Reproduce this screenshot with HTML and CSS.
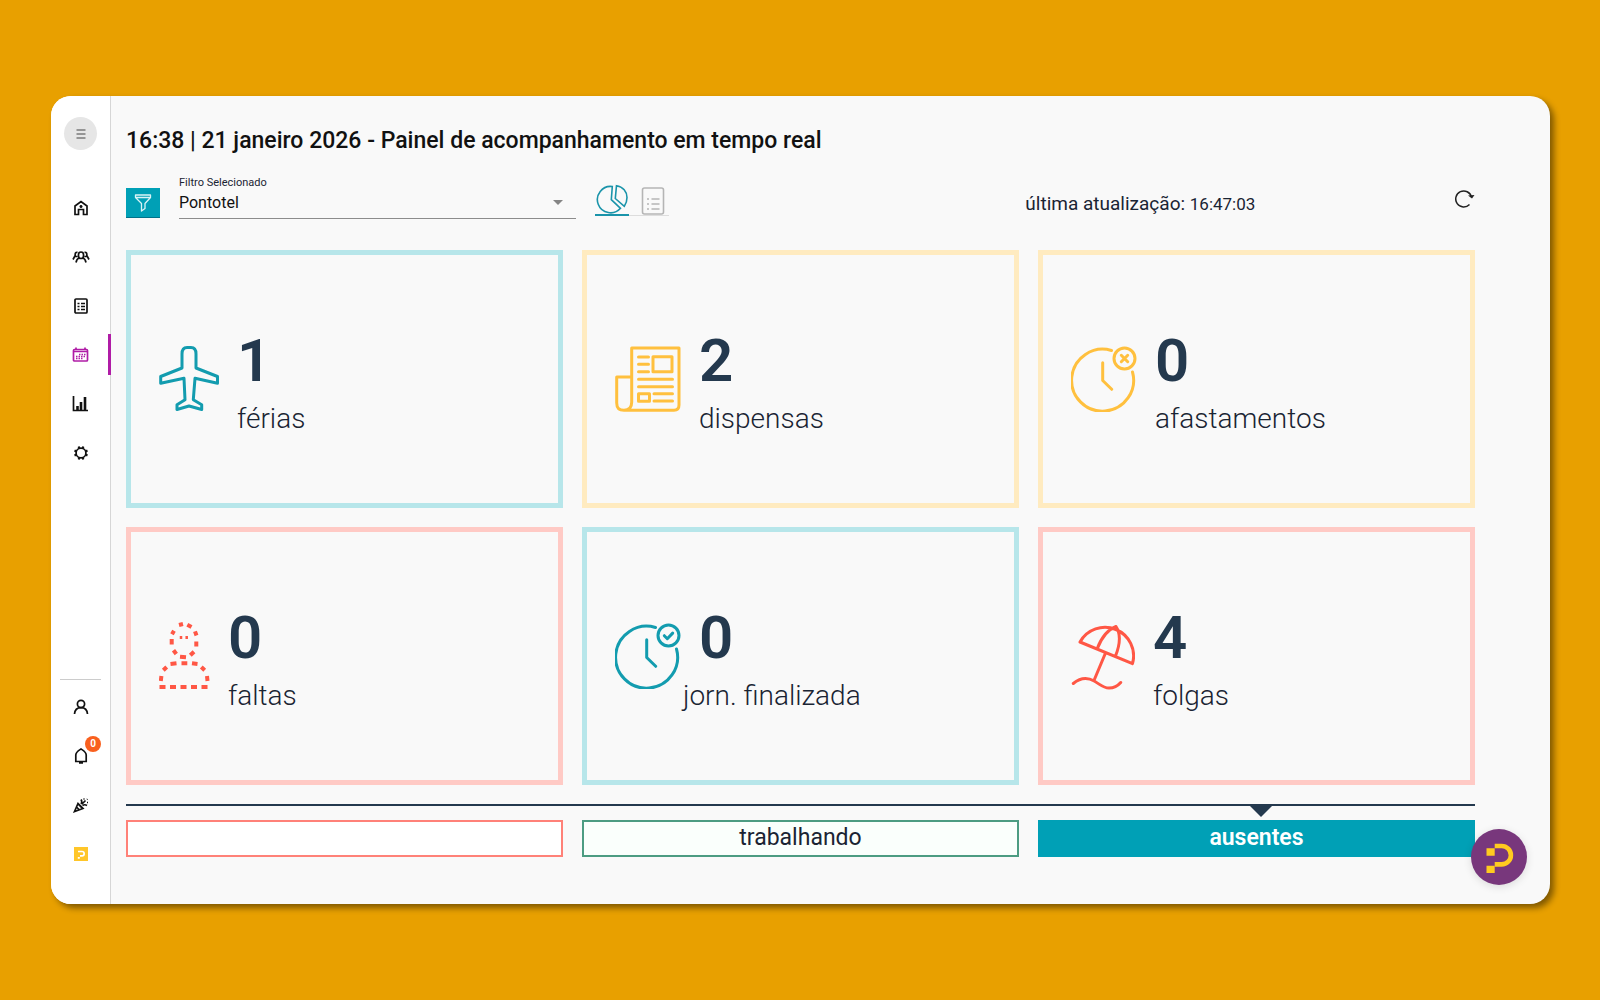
FILE: index.html
```html
<!DOCTYPE html>
<html lang="pt-BR">
<head>
<meta charset="UTF-8" />
<title>Painel de acompanhamento em tempo real</title>
<link rel="stylesheet" href="styles.css">
</head>
<body>

<div class="window">

  <!-- Sidebar -->
  <aside class="sidebar">
    <button class="menu-btn" type="button" aria-label="Menu">
      <svg width="10" height="10" viewBox="0 0 10 10"><path d="M0.500 1h9M0.500 5h9M0.500 9h9" stroke="#444" stroke-width="1"/></svg>
    </button>

    <nav class="nav">
      <a href="#" class="nav-item" aria-label="Início">
        <svg width="16" height="16" viewBox="0 0 16 16"><path d="M2 14.500V6L8 1.500 14 6v8.500h-3.500v-5h-5v5z"/><path d="M8 5v3M6.500 6.500h3"/></svg>
      </a>
      <a href="#" class="nav-item" aria-label="Equipe">
        <svg width="18" height="16" viewBox="0 0 18 16"><path d="M6.500 5.500a2.500 2.500 0 0 1 5 0v1.500a2.500 2.500 0 0 1-5 0zM5.500 3.300C3.500 3 3 4.500 3.200 6.500L1 10.500M12.500 3.300c2-.3 2.500 1.200 2.300 3.200L17 10.500M3 7.500h2.500M12.500 7.500H15M4 13.500c.5-2.500 1.500-4 3-4.500M14 13.500c-.5-2.500-1.500-4-3-4.500"/></svg>
      </a>
      <a href="#" class="nav-item" aria-label="Relatórios">
        <svg width="16" height="18" viewBox="0 0 16 18"><rect x="2" y="2" width="12" height="14" rx="1"/><path d="M4.500 6.500h2M8 6.500h4M4.500 9.500h2M8 9.500h4M4.500 12.500h2M8 12.500h4"/></svg>
      </a>
      <a href="#" class="nav-item active" aria-label="Calendário">
        <svg width="18" height="18" viewBox="0 0 18 18"><rect x="1.500" y="3.500" width="14" height="11.500" rx="1"/><path d="M4 1.500v2M13 1.500v2M1.500 5.500h14"/><path d="M7 8.500h6.500M4 10.500h9.500M4 12.500h6.500" stroke-dasharray="1.500 1"/></svg>
      </a>
      <a href="#" class="nav-item" aria-label="Gráficos">
        <svg width="17" height="17" viewBox="0 0 17 17"><path d="M1.500 1v14.500H16"/><path d="M5.500 15v-4M9 15V7M13 15V2" stroke-width="2.600"/></svg>
      </a>
      <a href="#" class="nav-item" aria-label="Configurações">
        <svg width="16" height="16" viewBox="0 0 16 16"><circle cx="8" cy="8" r="4.900"/><path d="M5.500 1.500l1 2M10.500 1.500l-1 2M5.500 14.500l1-2M10.500 14.500l-1-2M1.500 5.500l2 1M1.500 10.500l2-1M14.500 5.500l-2 1M14.500 10.500l-2-1" stroke-width="2"/></svg>
      </a>
    </nav>

    <div class="nav nav-bottom">
      <a href="#" class="nav-item" aria-label="Perfil">
        <svg width="16" height="16" viewBox="0 0 16 16"><circle cx="8" cy="5" r="3.600"/><path d="M1.500 15c.3-4 2.500-6.400 6.500-6.400s6.200 2.400 6.500 6.400"/></svg>
      </a>
      <a href="#" class="nav-item" aria-label="Notificações">
        <svg width="16" height="18" viewBox="0 0 16 18"><path d="M2.800 14.500V8c0-3 2.500-4.300 5.200-6 2.700 1.700 5.200 3 5.200 6v6.500zM6 16h4"/></svg>
        <span class="badge">0</span>
      </a>
      <a href="#" class="nav-item" aria-label="Novidades">
        <svg width="16" height="16" viewBox="0 0 16 16"><path d="M1.500 14.500L5 6.500l5 5zM3.500 10l3 3M5.500 7.500l4 4M8 7c1-1.500 1-3 0-4.500M9.500 8.500c1.500-1 3-1 4.500 0M9 7l3.500-3.500M11 1.500v1M14 5.500h1M14.500 2l-.5.500"/></svg>
      </a>
      <a href="#" class="nav-item" aria-label="Ajuda">
        <svg width="14" height="14" viewBox="0 0 14 14"><rect class="solid" width="14" height="14"/><path class="white" d="M4 4.500H8a2 2 0 0 1 0 4.300H6M3.800 10.800h2"/></svg>
      </a>
    </div>
  </aside>

  <main class="main">
    <h1>16:38 | 21 janeiro 2026 - Painel de acompanhamento em tempo real</h1>

    <!-- Filter bar -->
    <div class="toolbar">
      <button class="filter-btn" type="button" aria-label="Filtrar">
        <svg width="18" height="18" viewBox="0 0 18 18"><path d="M1.500 1h15v2.500L11 9.500v5L7.500 17V9.500L1.500 3.500zM1.500 3.500h15" fill="none" stroke="#d9f3f6" stroke-width="1.300" stroke-linejoin="round"/></svg>
      </button>

      <div class="field">
        <label for="filtro">Filtro Selecionado</label>
        <select id="filtro">
          <option>Pontotel</option>
        </select>
        <svg class="caret" width="10" height="5" viewBox="0 0 10 5"><path d="M0 0h10L5 5z" fill="#858585"/></svg>
      </div>

      <div class="views">
        <button class="view active" type="button" aria-label="Gráfico">
          <svg width="34" height="30" viewBox="0 0 34 30"><path d="M17.300 2.500A13.200 13.200 0 1 0 25.500 24.300L16.300 15.700zM21.500 1.700C28 2.500 32 8 32 13.500c0 3.500-1 6.300-2.700 8.800L20.300 14.500z"/></svg>
        </button>
        <button class="view" type="button" aria-label="Lista">
          <svg width="24" height="28" viewBox="0 0 24 28"><rect x="1.500" y="1" width="21" height="26" rx="2"/><path d="M6 12h2M10.500 12h8M6 17h2M10.500 17h8M6 22h2M10.500 22h8"/></svg>
        </button>
      </div>

      <div class="update">
        <p>última atualização: <time>16:47:03</time></p>
        <button class="refresh" type="button" aria-label="Atualizar">
          <svg width="20" height="20" viewBox="0 0 20 20"><path d="M14.500 15.500A8 8 0 1 1 16.500 8" fill="none" stroke="#222" stroke-width="1.500"/><path d="M13 6.500l6.500-.5L17 9.500z" fill="#222"/></svg>
        </button>
      </div>
    </div>

    <!-- Totals -->
    <section class="cards">
      <div class="card teal">
        <svg width="60" height="66" viewBox="0 0 60 66"><path d="M23 22V8Q23 1.500 28 1.500H32Q37 1.500 37 8V22L58.500 30.500V37.300L36 32.300L34.300 53.700L42.700 58.700V63.500L30 60L18 63.500V58.700L26 53.700L25 32.300L1.700 37.300V30.500z"/></svg>
        <div class="stat"><strong>1</strong><span>férias</span></div>
      </div>

      <div class="card yellow">
        <svg width="66" height="66" viewBox="0 0 66 66"><path d="M16.700 31V2H64V59Q64 64.300 59 64.300H9Q1.700 64.300 1.700 57V31H16.700V56Q16.700 64.300 9 64.300"/><path d="M23.500 11h10M23.500 18.300h10M23.500 25.700h10M23.500 33.300h34M23.500 40.700h34M39 47.700h18.500M39 55h18.500"/><rect x="38" y="10.700" width="19" height="15"/><rect x="23.500" y="47.700" width="11" height="7.500"/></svg>
        <div class="stat"><strong>2</strong><span>dispensas</span></div>
      </div>

      <div class="card yellow">
        <svg width="66" height="66" viewBox="0 0 66 66"><path d="M40.500 4.500A31 31 0 1 0 61.500 26M31.700 16.700V34.500L40.700 43.300"/><circle cx="53.500" cy="12.500" r="10.500"/><path d="M50.300 9.300l6.400 6.400M56.700 9.300l-6.400 6.400"/></svg>
        <div class="stat"><strong>0</strong><span>afastamentos</span></div>
      </div>

      <div class="card red">
        <svg class="dashes" width="51" height="68" viewBox="0 0 51 68"><path d="M20 3L24 2M28.300 2.800L32.500 5M13 12.300L15 8.700M36 9.300L37.500 13.500M12.700 17V22.500M37.300 19.500V24.500M14.500 28.300L17.300 32M21 34.800L27 35.300M31.300 33.300L35 29.700M11.500 42L17.500 41.300M22.500 41.300H28.300M33 41.300L38.500 42M4.300 48.300L7.700 45M42.300 45L45.700 48.300M1.800 59L2.400 54M48.500 59L48 54M0.500 65H6.500M11 65H17M21.500 65H27.500M32 65H38M42.500 65H48.500"/><path d="M22 14v3M27.700 14v3" stroke-width="2.500"/></svg>
        <div class="stat"><strong>0</strong><span>faltas</span></div>
      </div>

      <div class="card teal">
        <svg width="66" height="66" viewBox="0 0 66 66"><path d="M40.500 4.500A31 31 0 1 0 61.500 26M31.700 16.700V34.500L40.700 43.300"/><circle cx="53.500" cy="12.500" r="10.500"/><path d="M49.300 12.700l3 3 5.400-5.600"/></svg>
        <div class="stat outdent"><strong>0</strong><span>jorn. finalizada</span></div>
      </div>

      <div class="card red">
        <svg width="64" height="68" viewBox="0 0 64 68"><path d="M9 20A28.600 28.600 0 0 1 61.500 41.700zM45 4.500Q33 9 26.300 26.500M45 4.500Q52 15 44.500 34M34.500 31L23.200 58M2.300 61.500C9 56 16 55 23.200 59C30 63 32 66 38 66Q45 66 49.700 60.500"/></svg>
        <div class="stat"><strong>4</strong><span>folgas</span></div>
      </div>
    </section>

    <!-- Status tabs -->
    <div class="status">
      <button class="tab tab-red" type="button" aria-label="Atrasados"></button>
      <button class="tab tab-green" type="button">trabalhando</button>
      <button class="tab tab-selected" type="button">ausentes</button>
    </div>
  </main>

  <button class="help" type="button" aria-label="Pontotel">
    <svg width="32" height="32" viewBox="-16 -16 32 32"><path d="M-12.500 -8.700h8.200v7.400h-8.200zM-12.500 8.700h8.200v7.300h-8.200z" fill="#ffcb1f"/><path d="M-4.300 -11H2.700A9.200 9.200 0 0 1 2.700 7.400H-4.300" fill="none" stroke="#ffcb1f" stroke-width="4.600"/></svg>
  </button>

</div>

</body>
</html>
```
FILE: styles.css
```css
* {
  box-sizing: border-box;
}
body {
  margin: 0;
  min-height: 100vh;
  padding: 96px 50px 96px 51px;
  display: flex;
  background: #e8a000;
  font-family: Roboto, "Liberation Sans", sans-serif;
  color: #1a2433;
}
button {
  border: 0;
  padding: 0;
  background: none;
  font-family: inherit;
  cursor: pointer;
}
svg {
  display: block;
}
.window {
  position: relative;
  flex: 1;
  display: flex;
  background: #f9f9f9;
  border-radius: 20px;
  box-shadow: 4px 4px 6px rgba(0, 0, 0, 0.45);
}

/* sidebar */
.sidebar {
  width: 60px;
  background: #fff;
  border-right: 1px solid #d6d6d6;
  border-radius: 20px 0 0 20px;
  padding: 21px 0 26px;
  display: flex;
  flex-direction: column;
  align-items: center;
}
.menu-btn {
  width: 33px;
  height: 33px;
  border-radius: 50%;
  background: #e6e6e6;
  display: grid;
  place-items: center;
}
.nav {
  width: 100%;
  margin-top: 33px;
}
.nav-item {
  position: relative;
  height: 49px;
  display: grid;
  place-items: center;
}
.nav-item svg {
  fill: none;
  stroke: #111;
  stroke-width: 1.7;
}
.nav-item.active svg {
  stroke: #b01ca6;
}
.nav-item.active::after {
  content: "";
  position: absolute;
  top: 4px;
  right: -1px;
  width: 3px;
  height: 41px;
  background: #b01ca6;
}
.nav-bottom {
  width: 41px;
  margin-top: auto;
  padding-top: 2px;
  border-top: 1px solid #ccc;
}
.nav-item .solid {
  fill: #ffc629;
  stroke: none;
}
.nav-item .white {
  stroke: #fff;
}
.badge {
  position: absolute;
  top: 5px;
  right: 0;
  width: 16px;
  height: 16px;
  border-radius: 50%;
  background: #f9601e;
  color: #fff;
  font-size: 10px;
  font-weight: 700;
  line-height: 16px;
  text-align: center;
}

/* main area */
.main {
  flex: 1;
  padding: 29px 75px 47px 15px;
  display: flex;
  flex-direction: column;
}
h1 {
  margin: 0;
  font-size: 23px;
  font-weight: 500;
  line-height: 32px;
  color: #111;
}
.toolbar {
  display: flex;
  align-items: flex-end;
  height: 62px;
}
.filter-btn {
  width: 34px;
  height: 30px;
  margin-bottom: 1px;
  background: #00a0b6;
  border-bottom: 1px solid #00728a;
  display: grid;
  place-items: center;
}
.field {
  position: relative;
  width: 397px;
  margin-left: 19px;
}
.field label {
  display: block;
  font-size: 11px;
  line-height: 13px;
}
.field select {
  display: block;
  width: 100%;
  height: 30px;
  padding: 0 0 3px;
  border: 0;
  border-bottom: 1px solid #8c8c8c;
  border-radius: 0;
  appearance: none;
  background: none;
  font-family: inherit;
  font-size: 16px;
  color: #111;
}
.caret {
  position: absolute;
  right: 13px;
  bottom: 14px;
  pointer-events: none;
}
.views {
  display: flex;
  margin-left: 19px;
  padding-bottom: 3px;
}
.view {
  width: 40px;
  height: 32px;
  padding-left: 8px;
  border-bottom: 1px solid #ddd;
  display: grid;
  place-items: end center;
}
.view svg {
  fill: none;
  stroke: #b5b5b5;
  stroke-width: 1.6;
}
.view.active {
  width: 34px;
  padding-left: 0;
  border-bottom: 2px solid #1a94aa;
}
.view.active svg {
  stroke: #1a94aa;
}
.update {
  width: 33.333%;
  height: 31px;
  margin-left: auto;
  display: flex;
  justify-content: space-between;
}
.update p {
  margin: 0;
  font-size: 19px;
  line-height: 32px;
}
.update time {
  font-size: 17px;
}
.refresh {
  align-self: flex-start;
  padding-top: 1px;
}

/* cards */
.cards {
  flex: 1;
  margin-top: 31px;
  display: grid;
  grid-template-columns: repeat(3, 1fr);
  grid-auto-rows: 1fr;
  gap: 19px;
}
.card {
  border: 5px solid;
  padding: 0 28px;
  display: flex;
  align-items: center;
  gap: 18px;
}
.card svg {
  fill: none;
  stroke-width: 3;
  stroke-linecap: round;
  stroke-linejoin: round;
}
.card .dashes {
  stroke-width: 4;
  stroke-linecap: butt;
}
.teal {
  border-color: #b7e6ea;
}
.teal svg {
  stroke: #139caf;
}
.yellow {
  border-color: #ffebc0;
}
.yellow svg {
  stroke: #ffc03e;
}
.red {
  border-color: #ffcac5;
}
.red svg {
  stroke: #ff5745;
}
.stat {
  display: flex;
  flex-direction: column;
  padding-top: 16px;
}
.stat strong {
  font-size: 60px;
  font-weight: 600;
  line-height: 64px;
  color: #24394e;
}
.stat span {
  font-size: 28px;
  font-weight: 300;
  line-height: 52px;
}
.stat.outdent span {
  margin-left: -16px;
}

/* status tabs */
.status {
  margin-top: 19px;
  padding-top: 14px;
  border-top: 2px solid #24394e;
  display: grid;
  grid-template-columns: repeat(3, 1fr);
  gap: 19px;
}
.tab {
  position: relative;
  height: 37px;
  padding-bottom: 2px;
  font-size: 23px;
  color: #1a2433;
}
.tab-red {
  border: 2px solid #ff8178;
  background: #fff;
}
.tab-green {
  border: 2px solid #4c9c82;
  background: #fafffc;
}
.tab-selected {
  background: #00a0b6;
  color: #fff;
  font-weight: 600;
}
.tab-selected::before {
  content: "";
  position: absolute;
  top: -15px;
  left: 51%;
  border: 12px solid transparent;
  border-top-color: #24394e;
  border-bottom: 0;
  transform: translateX(-50%);
}

.help {
  position: absolute;
  right: 23px;
  bottom: 19px;
  width: 56px;
  height: 56px;
  border-radius: 50%;
  background: #78377c;
  box-shadow: 0 2px 8px rgba(0, 0, 0, 0.12);
  display: grid;
  place-items: center;
}
```
